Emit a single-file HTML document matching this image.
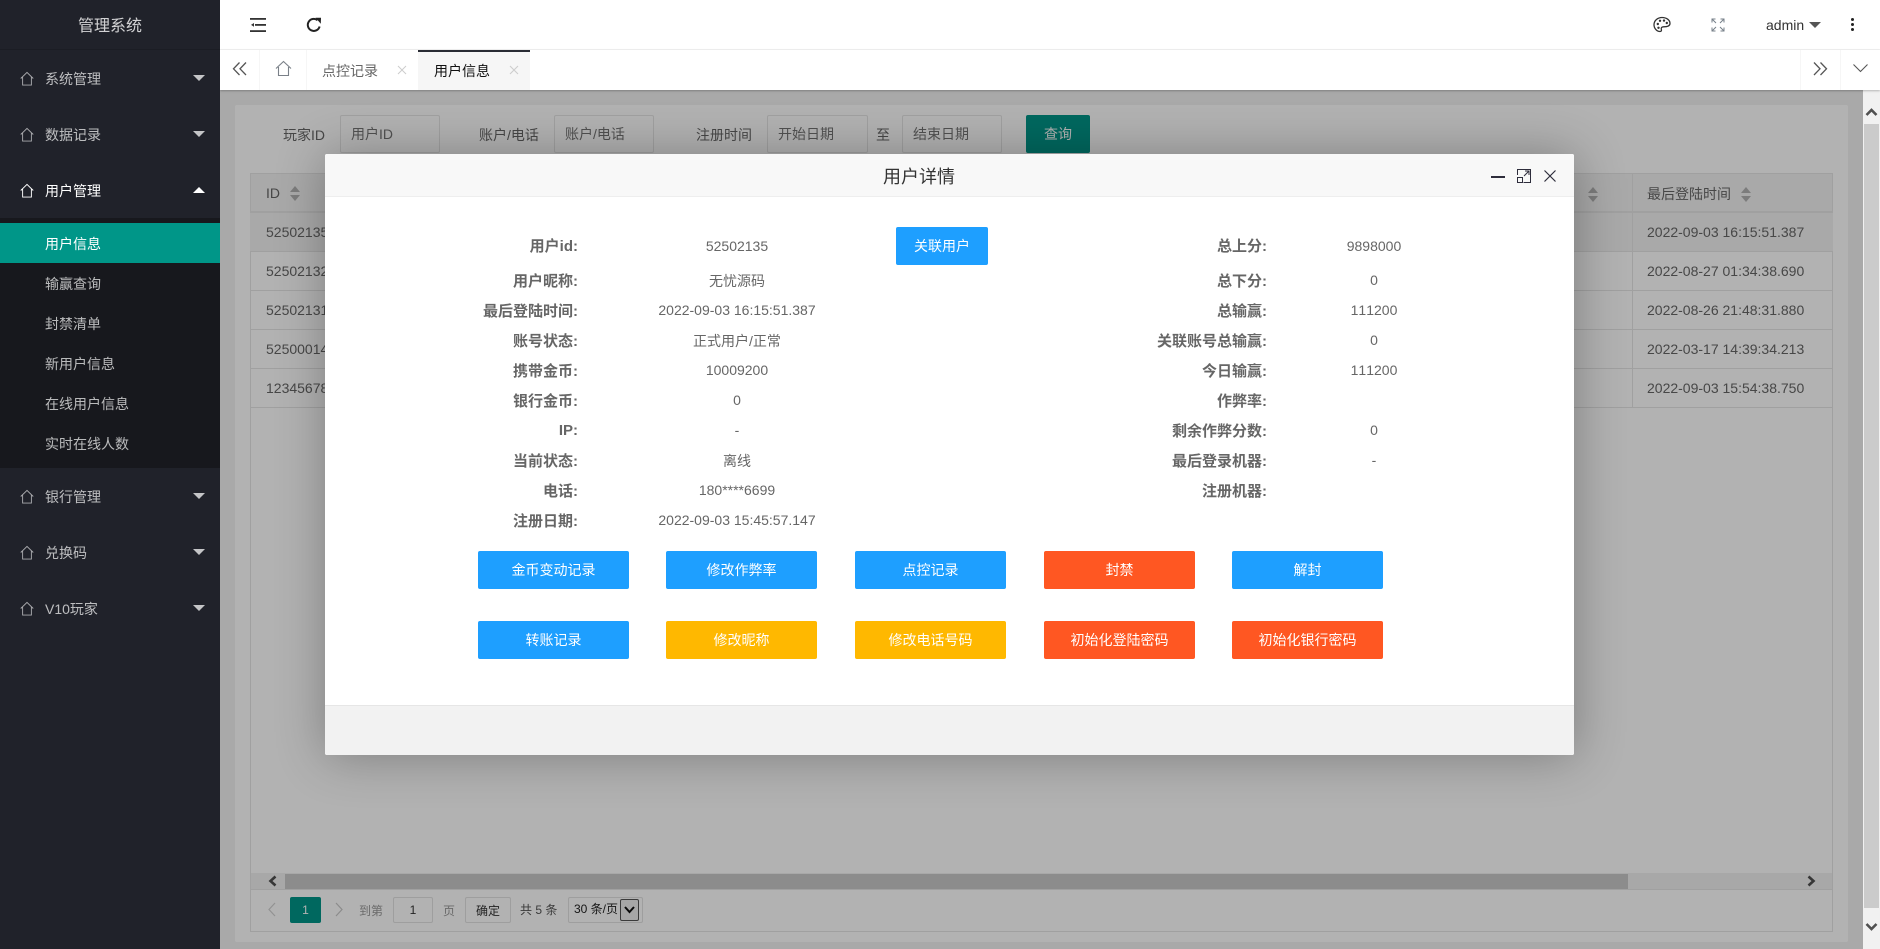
<!DOCTYPE html>
<html lang="zh">
<head>
<meta charset="utf-8">
<title>管理系统</title>
<style>
html,body{margin:0;padding:0;width:1880px;height:949px;overflow:hidden;background:#f2f2f2;}
body{font-family:"Liberation Sans","Noto Sans CJK SC",sans-serif;font-size:14px;color:#666;position:relative;}
div,span,svg{position:absolute;box-sizing:border-box;}
.t{white-space:nowrap;height:20px;line-height:20px;}
.s{color:rgba(255,255,255,.7);left:45px;}
.w{color:#fff;}
.ar{left:193px;width:0;height:0;border-left:6px solid transparent;border-right:6px solid transparent;border-top:6px solid #c4c5c7;}
.up{border-top:0;border-bottom:6px solid #fff;}
.ic{left:20px;width:14px;height:15px;fill:none;stroke:#a9aaad;stroke-width:1;}
.inp{border:1px solid #e6e6e6;background:#fff;border-radius:2px;line-height:36px;padding-left:10px;color:#757575;}
.th{background:#f2f2f2;}
.hl{background:#e6e6e6;height:1px;left:250px;width:1583px;}
.td{left:266px;color:#666;}
.l{font-weight:bold;text-align:right;color:#666;font-size:15px;}
.ll{left:400px;width:178px;}
.lr{left:1000px;width:267px;}
.vl{left:637px;width:200px;text-align:center;}
.vr{left:1274px;width:200px;text-align:center;font-kerning:none;}
.b{height:38px;line-height:38px;width:151px;text-align:center;color:#fff;border-radius:2px;background:#1e9fff;white-space:nowrap;}
.o{background:#ff5722;}
.y{background:#ffb800;}
.so{width:0;height:0;border-left:5px solid transparent;border-right:5px solid transparent;}
.su{border-bottom:6px solid #b2b2b2;}
.sd{border-top:6px solid #b2b2b2;}
.pg{font-size:12px;}
</style>
</head>
<body>
<!-- content -->
<div style="left:220px;top:90px;width:1643px;height:859px;background:#f2f2f2"></div>
<div style="left:235px;top:105px;width:1613px;height:837px;background:#fff;border-radius:2px"></div>

<div class="t" style="left:283px;top:125px;color:#666">玩家ID</div>
<div class="inp" style="left:340px;top:115px;width:100px;height:38px">用户ID</div>
<div class="t" style="left:479px;top:125px">账户/电话</div>
<div class="inp" style="left:554px;top:115px;width:100px;height:38px">账户/电话</div>
<div class="t" style="left:696px;top:125px">注册时间</div>
<div class="inp" style="left:767px;top:115px;width:101px;height:38px">开始日期</div>
<div class="t" style="left:876px;top:125px">至</div>
<div class="inp" style="left:902px;top:115px;width:100px;height:38px">结束日期</div>
<div style="left:1026px;top:115px;width:64px;height:38px;line-height:38px;background:#009688;color:#fff;text-align:center;border-radius:2px">查询</div>

<!-- table -->
<div style="left:250px;top:173px;width:1583px;height:759px;border:1px solid #e6e6e6"></div>
<div class="th" style="left:250px;top:173px;width:1583px;height:39px;border:1px solid #e6e6e6"></div>
<div class="hl" style="top:212px"></div><div class="hl" style="top:251px"></div><div class="hl" style="top:290px"></div><div class="hl" style="top:329px"></div><div class="hl" style="top:368px"></div><div class="hl" style="top:407px"></div>
<div style="left:250px;top:213px;width:1583px;height:38px;background:#f2f2f2"></div>
<div style="left:1632px;top:173px;width:1px;height:234px;background:#e6e6e6"></div>
<div class="t td" style="top:183px">ID</div>
<div class="so su" style="left:290px;top:186px"></div><div class="so sd" style="left:290px;top:195px"></div>
<div class="t" style="left:1647px;top:184px">最后登陆时间</div>
<div class="so su" style="left:1741px;top:187px"></div><div class="so sd" style="left:1741px;top:196px"></div>
<div class="so su" style="left:1588px;top:187px"></div><div class="so sd" style="left:1588px;top:196px"></div>
<div class="t td" style="top:222px">52502135</div>
<div class="t td" style="top:261px">52502132</div>
<div class="t td" style="top:300px">52502131</div>
<div class="t td" style="top:339px">52500014</div>
<div class="t td" style="top:378px">12345678</div>
<div class="t" style="left:1647px;top:222px">2022-09-03 16:15:51.387</div>
<div class="t" style="left:1647px;top:261px">2022-08-27 01:34:38.690</div>
<div class="t" style="left:1647px;top:300px">2022-08-26 21:48:31.880</div>
<div class="t" style="left:1647px;top:339px">2022-03-17 14:39:34.213</div>
<div class="t" style="left:1647px;top:378px">2022-09-03 15:54:38.750</div>

<!-- h scroll -->
<div style="left:251px;top:873px;width:1581px;height:17px;background:#f1f1f1;border-bottom:1px solid #e6e6e6"></div>
<div style="left:285px;top:874px;width:1343px;height:15px;background:#c9c9c9"></div>
<svg style="left:267px;top:875px;width:12px;height:12px" viewBox="0 0 12 12"><path d="M8.500 1.500L3.500 6L8.500 10.500" fill="none" stroke="#505050" stroke-width="2.600"/></svg>
<svg style="left:1805px;top:875px;width:12px;height:12px" viewBox="0 0 12 12"><path d="M3.500 1.500L8.500 6L3.500 10.500" fill="none" stroke="#505050" stroke-width="2.600"/></svg>

<!-- pagination -->
<svg style="left:266px;top:902px;width:12px;height:15px" viewBox="0 0 12 15"><path d="M9 1L3 7.500L9 14" fill="none" stroke="#d2d2d2" stroke-width="1.200"/></svg>
<div class="t pg" style="left:290px;top:897px;width:31px;height:26px;line-height:26px;background:#009688;color:#fff;text-align:center;border-radius:2px">1</div>
<svg style="left:333px;top:902px;width:12px;height:15px" viewBox="0 0 12 15"><path d="M3 1L9 7.500L3 14" fill="none" stroke="#c8c8c8" stroke-width="1.200"/></svg>
<div class="t pg" style="left:359px;top:901px;color:#999">到第</div>
<div class="t pg" style="left:393px;top:897px;width:40px;height:26px;line-height:24px;border:1px solid #e2e2e2;border-radius:2px;text-align:center;color:#333">1</div>
<div class="t pg" style="left:443px;top:901px;color:#999">页</div>
<div class="t pg" style="left:465px;top:897px;width:46px;height:26px;line-height:26px;border:1px solid #e2e2e2;border-radius:2px;text-align:center;color:#333">确定</div>
<div class="t pg" style="left:520px;top:900px;color:#555">共 5 条</div>
<div style="left:568px;top:897px;width:75px;height:26px;border:1px solid #e2e2e2;border-radius:2px"></div>
<div class="t pg" style="left:574px;top:899px;color:#222">30 条/页</div>
<div style="left:620px;top:899px;width:19px;height:22px;border:1px solid #555;border-radius:2px;background:#efefef"></div>
<svg style="left:623px;top:905px;width:13px;height:10px" viewBox="0 0 13 10"><path d="M2 2L6.500 7L11 2" fill="none" stroke="#111" stroke-width="2"/></svg>

<!-- shade -->
<div style="left:220px;top:90px;width:1643px;height:859px;background:rgba(0,0,0,.3)"></div>

<!-- page scrollbar -->
<div style="left:1863px;top:90px;width:17px;height:859px;background:#f1f1f1"></div>
<div style="left:1864px;top:124px;width:15px;height:784px;background:#cbcbcb"></div>
<svg style="left:1865px;top:106px;width:13px;height:12px" viewBox="0 0 13 12"><path d="M1.500 9L6.500 4L11.500 9" fill="none" stroke="#505050" stroke-width="2.600"/></svg>
<svg style="left:1865px;top:921px;width:13px;height:12px" viewBox="0 0 13 12"><path d="M1.500 3L6.500 8L11.500 3" fill="none" stroke="#505050" stroke-width="2.600"/></svg>

<!-- header -->
<div style="left:220px;top:0;width:1660px;height:50px;background:#fff;border-bottom:1px solid #f1f1f1"></div>
<svg style="left:249px;top:17px;width:18px;height:16px" viewBox="0 0 18 16" fill="#333"><rect x="1" y="1" width="16" height="1.800"/><rect x="1" y="13.200" width="16" height="1.800"/><rect x="6" y="7" width="11" height="1.800"/><path d="M2 7.900L5 6V9.800Z"/></svg>
<svg style="left:306px;top:17px;width:16px;height:16px" viewBox="0 0 16 16"><path d="M13.600 9.500A6 6 0 1 1 11.500 3.200" fill="none" stroke="#222" stroke-width="2"/><path d="M9.500 0.800L15 0.800L14.800 6.800Z" fill="#222"/></svg>
<svg style="left:1653px;top:16px;width:18px;height:17px" viewBox="0 0 18 17"><path d="M9 1.500C4.500 1.500 1 4.700 1 8.700C1 12.500 4 15.500 7 15.500C8.500 15.500 8.700 14.200 8.300 13.200C7.800 11.700 9 10.800 10.500 10.800C14 10.800 17 10 17 7.500C17 4 13.500 1.500 9 1.500Z" fill="none" stroke="#333" stroke-width="1.300"/><circle cx="4.800" cy="8" r="1.200" fill="#333"/><circle cx="7" cy="4.800" r="1.200" fill="#333"/><circle cx="11" cy="4.600" r="1.200" fill="#333"/><circle cx="13.800" cy="7" r="1.200" fill="#333"/><circle cx="5.500" cy="11.800" r="1.200" fill="#333"/></svg>
<svg style="left:1711px;top:18px;width:14px;height:14px" viewBox="0 0 14 14" fill="none" stroke="#77808a" stroke-width="1"><path d="M1 4.500V1H4.500M1 1L5 5M9.500 1H13V4.500M13 1L9 5M1 9.500V13H4.500M1 13L5 9M13 9.500V13H9.500M13 13L9 9"/></svg>
<div class="t" style="left:1766px;top:15px;font-size:14px;color:#333">admin</div>
<div style="left:1809px;top:22px;width:0;height:0;border-left:6px solid transparent;border-right:6px solid transparent;border-top:6px solid #555"></div>
<div style="left:1850.500px;top:18px;width:3px;height:3px;background:#222;border-radius:50%"></div>
<div style="left:1850.500px;top:23px;width:3px;height:3px;background:#222;border-radius:50%"></div>
<div style="left:1850.500px;top:28px;width:3px;height:3px;background:#222;border-radius:50%"></div>

<!-- tabs -->
<div style="left:220px;top:50px;width:1660px;height:40px;background:#fff;box-shadow:0 1px 2px rgba(0,0,0,.25)"></div>
<div style="left:259px;top:50px;width:1px;height:40px;background:#f6f6f6"></div>
<div style="left:306px;top:50px;width:1px;height:40px;background:#f6f6f6"></div>
<div style="left:418px;top:50px;width:112px;height:40px;background:#f6f6f6"></div>
<div style="left:418px;top:50px;width:112px;height:2px;background:#292b34"></div>
<div style="left:1800px;top:50px;width:1px;height:40px;background:#f6f6f6"></div>
<div style="left:1840px;top:50px;width:1px;height:40px;background:#f6f6f6"></div>
<svg style="left:232px;top:61px;width:16px;height:16px" viewBox="0 0 16 16" fill="none" stroke="#555" stroke-width="1.300"><path d="M7.500 1.500L1.500 7.800L7.500 14M14 1.500L8 7.800L14 14"/></svg>
<svg style="left:275px;top:60px;width:17px;height:17px" viewBox="0 0 17 17" fill="none" stroke="#7a8088" stroke-width="1.100"><path d="M1 8.500L8.500 1.500L16 8.500M3.500 7V15.500H13.500V7"/></svg>
<div class="t" style="left:322px;top:61px;color:#666">点控记录</div>
<svg style="left:397px;top:65px;width:10px;height:10px" viewBox="0 0 10 10" fill="none" stroke="#ccc" stroke-width="1"><path d="M1 1L9 9M9 1L1 9"/></svg>
<div class="t" style="left:434px;top:61px;color:#111">用户信息</div>
<svg style="left:509px;top:65px;width:10px;height:10px" viewBox="0 0 10 10" fill="none" stroke="#ccc" stroke-width="1"><path d="M1 1L9 9M9 1L1 9"/></svg>
<svg style="left:1812px;top:61px;width:16px;height:16px" viewBox="0 0 16 16" fill="none" stroke="#555" stroke-width="1.300"><path d="M2 1.500L8 7.800L2 14M8.500 1.500L14.500 7.800L8.500 14"/></svg>
<svg style="left:1852px;top:63px;width:17px;height:11px" viewBox="0 0 17 11" fill="none" stroke="#555" stroke-width="1.100"><path d="M1.500 1.500L8.500 8.500L15.500 1.500"/></svg>

<!-- sidebar -->
<div style="left:0;top:0;width:220px;height:949px;background:#20222a"></div>
<div style="left:0;top:49px;width:220px;height:1px;background:#1b1d24"></div>
<div class="t" style="left:78px;top:16px;font-size:16px;line-height:22px;height:22px;color:rgba(255,255,255,.8)">管理系统</div>
<div style="left:0;top:218px;width:220px;height:250px;background:#17181d"></div>
<div style="left:0;top:223px;width:220px;height:40px;background:#009688"></div>

<svg class="ic" style="top:71px" viewBox="0 0 15 16"><path d="M0.800 8L7.500 1.500L14.200 8M2.800 6.500V15H12.200V6.500"/></svg>
<div class="t s" style="top:69px">系统管理</div><div class="ar" style="top:75px"></div>
<svg class="ic" style="top:127px" viewBox="0 0 15 16"><path d="M0.800 8L7.500 1.500L14.200 8M2.800 6.500V15H12.200V6.500"/></svg>
<div class="t s" style="top:125px">数据记录</div><div class="ar" style="top:131px"></div>
<svg class="ic" style="top:183px;stroke:#fff" viewBox="0 0 15 16"><path d="M0.800 8L7.500 1.500L14.200 8M2.800 6.500V15H12.200V6.500"/></svg>
<div class="t s w" style="top:181px;color:#fff">用户管理</div><div class="ar up" style="top:187px"></div>
<div class="t s w" style="top:234px;color:#fff">用户信息</div>
<div class="t s" style="top:274px">输赢查询</div>
<div class="t s" style="top:314px">封禁清单</div>
<div class="t s" style="top:354px">新用户信息</div>
<div class="t s" style="top:394px">在线用户信息</div>
<div class="t s" style="top:434px">实时在线人数</div>
<svg class="ic" style="top:489px" viewBox="0 0 15 16"><path d="M0.800 8L7.500 1.500L14.200 8M2.800 6.500V15H12.200V6.500"/></svg>
<div class="t s" style="top:487px">银行管理</div><div class="ar" style="top:493px"></div>
<svg class="ic" style="top:545px" viewBox="0 0 15 16"><path d="M0.800 8L7.500 1.500L14.200 8M2.800 6.500V15H12.200V6.500"/></svg>
<div class="t s" style="top:543px">兑换码</div><div class="ar" style="top:549px"></div>
<svg class="ic" style="top:601px" viewBox="0 0 15 16"><path d="M0.800 8L7.500 1.500L14.200 8M2.800 6.500V15H12.200V6.500"/></svg>
<div class="t s" style="top:599px">V10玩家</div><div class="ar" style="top:605px"></div>

<!-- modal -->
<div style="left:325px;top:154px;width:1249px;height:601px;background:#fff;border-radius:2px;box-shadow:1px 1px 50px rgba(0,0,0,.3)"></div>
<div style="left:325px;top:154px;width:1249px;height:43px;background:#f8f8f8;border-bottom:1px solid #eee;border-radius:2px 2px 0 0"></div>
<div class="t" style="left:883px;top:165px;font-size:18px;height:24px;line-height:24px;color:#333">用户详情</div>
<div style="left:1491px;top:176px;width:14px;height:2px;background:#2e2d3c"></div>
<svg style="left:1517px;top:169px;width:14px;height:14px" viewBox="0 0 14 14" fill="none" stroke="#2e2d3c" stroke-width="1"><path d="M0.500 6V0.500H13.500V13.500H6.500M0.500 8.500H5.500V13.500H0.500ZM7 7L12 2M8 2H12V6"/></svg>
<svg style="left:1544px;top:170px;width:12px;height:12px" viewBox="0 0 12 12" fill="none" stroke="#2e2d3c" stroke-width="1.200"><path d="M0.500 0.500L11.500 11.500M11.500 0.500L0.500 11.500"/></svg>

<div class="t l ll" style="top:237px">用户id:</div><div class="t vl" style="top:236px">52502135</div>
<div class="t l ll" style="top:272px">用户昵称:</div><div class="t vl" style="top:271px">无忧源码</div>
<div class="t l ll" style="top:302px">最后登陆时间:</div><div class="t vl" style="top:300px">2022-09-03 16:15:51.387</div>
<div class="t l ll" style="top:332px">账号状态:</div><div class="t vl" style="top:331px">正式用户/正常</div>
<div class="t l ll" style="top:362px">携带金币:</div><div class="t vl" style="top:360px">10009200</div>
<div class="t l ll" style="top:392px">银行金币:</div><div class="t vl" style="top:390px">0</div>
<div class="t l ll" style="top:421px">IP:</div><div class="t vl" style="top:420px">-</div>
<div class="t l ll" style="top:452px">当前状态:</div><div class="t vl" style="top:451px">离线</div>
<div class="t l ll" style="top:482px">电话:</div><div class="t vl" style="top:480px">180****6699</div>
<div class="t l ll" style="top:512px">注册日期:</div><div class="t vl" style="top:510px">2022-09-03 15:45:57.147</div>

<div class="t l lr" style="top:237px">总上分:</div><div class="t vr" style="top:236px">9898000</div>
<div class="t l lr" style="top:272px">总下分:</div><div class="t vr" style="top:270px">0</div>
<div class="t l lr" style="top:302px">总输赢:</div><div class="t vr" style="top:300px">111200</div>
<div class="t l lr" style="top:332px">关联账号总输赢:</div><div class="t vr" style="top:330px">0</div>
<div class="t l lr" style="top:362px">今日输赢:</div><div class="t vr" style="top:360px">111200</div>
<div class="t l lr" style="top:392px">作弊率:</div>
<div class="t l lr" style="top:422px">剩余作弊分数:</div><div class="t vr" style="top:420px">0</div>
<div class="t l lr" style="top:452px">最后登录机器:</div><div class="t vr" style="top:450px">-</div>
<div class="t l lr" style="top:482px">注册机器:</div>

<div class="b" style="left:896px;top:227px;width:92px">关联用户</div>

<div class="b" style="left:478px;top:551px">金币变动记录</div>
<div class="b" style="left:666px;top:551px">修改作弊率</div>
<div class="b" style="left:855px;top:551px">点控记录</div>
<div class="b o" style="left:1044px;top:551px">封禁</div>
<div class="b" style="left:1232px;top:551px">解封</div>
<div class="b" style="left:478px;top:621px">转账记录</div>
<div class="b y" style="left:666px;top:621px">修改昵称</div>
<div class="b y" style="left:855px;top:621px">修改电话号码</div>
<div class="b o" style="left:1044px;top:621px">初始化登陆密码</div>
<div class="b o" style="left:1232px;top:621px">初始化银行密码</div>

<div style="left:325px;top:705px;width:1249px;height:50px;background:#f2f2f2;border-top:1px solid #e6e6e6;border-radius:0 0 2px 2px"></div>
</body>
</html>
